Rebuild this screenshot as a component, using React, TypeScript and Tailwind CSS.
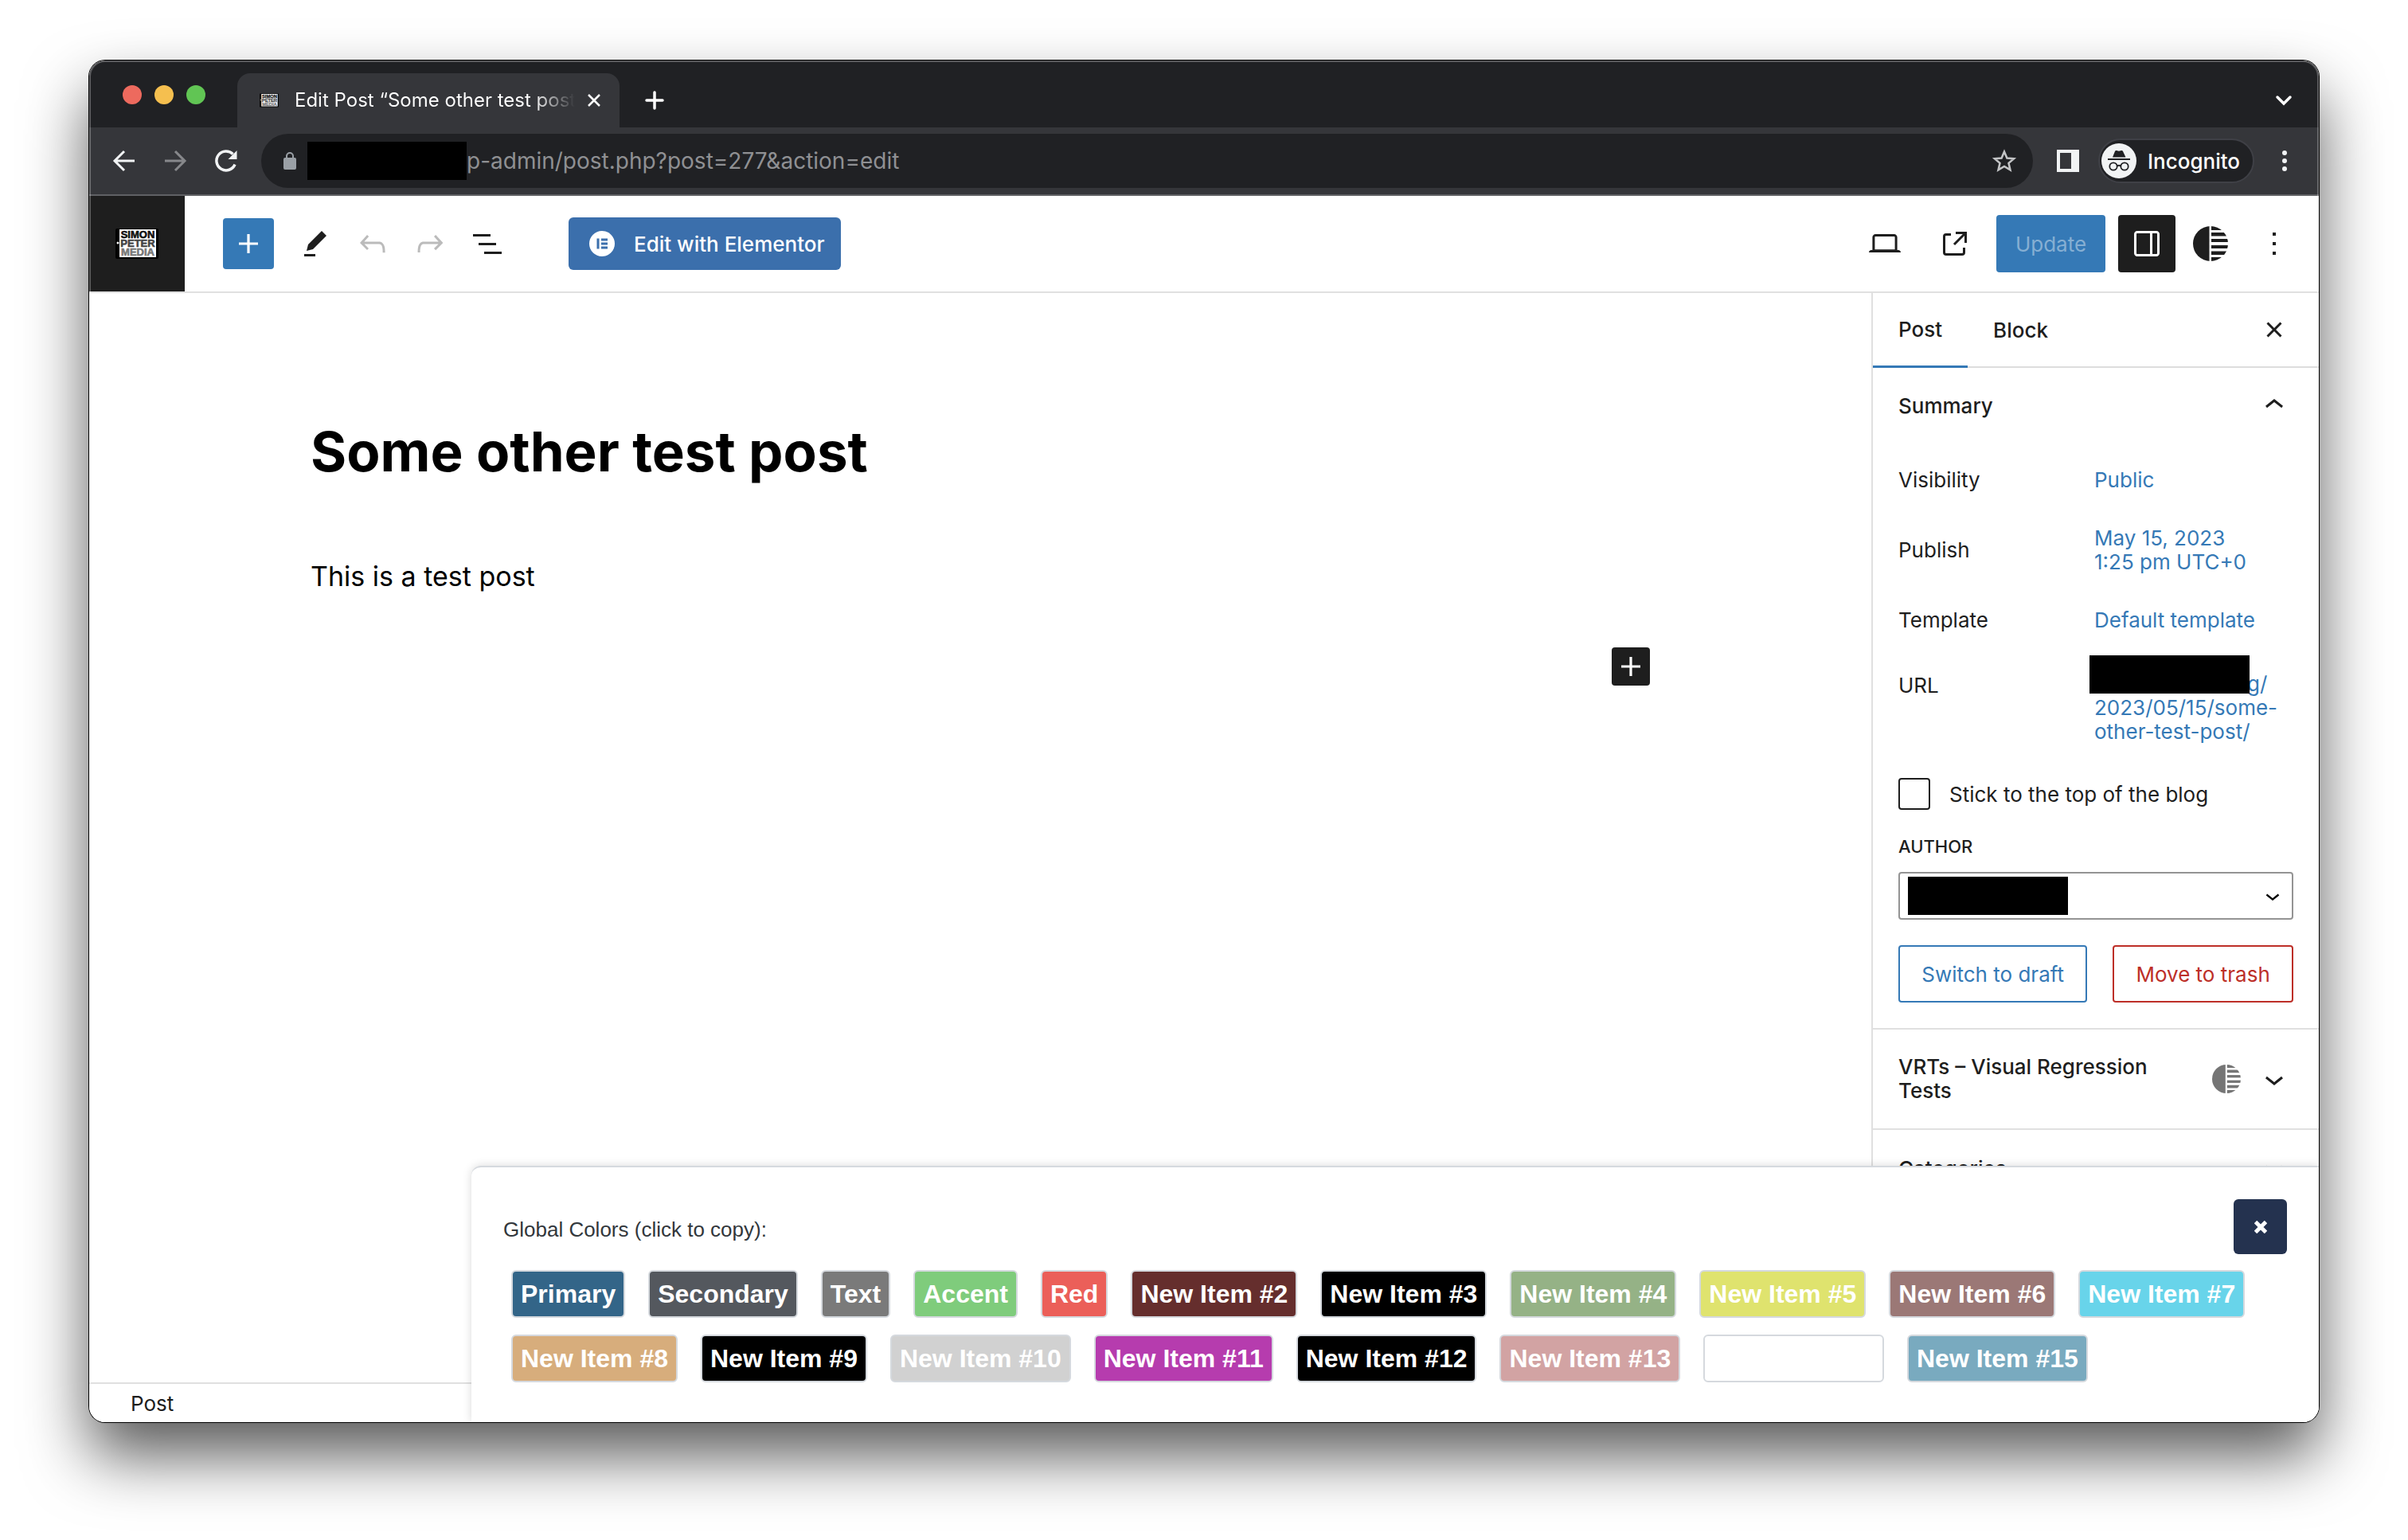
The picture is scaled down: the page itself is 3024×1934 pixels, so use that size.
import type { ReactNode } from 'react';

const font = "font-['Inter',sans-serif]";

function WpIcon({ d, size = 'size-12', className = '' }: { d: string; size?: string; className?: string }) {
  return (
    <svg viewBox="0 0 24 24" className={`${size} shrink-0 ${className}`} fill="currentColor" aria-hidden="true">
      <path fillRule="evenodd" d={d} />
    </svg>
  );
}

const icons = {
  plus: 'M18 11.2h-5.2V6h-1.6v5.2H6v1.6h5.2V18h1.6v-5.2H18z',
  edit: 'm19 7-3-3-8.5 8.5-1 4 4-1L19 7Zm-7 11.5H5V20h7v-1.5Z',
  undo: 'M18.3 11.7c-.6-.6-1.4-.9-2.3-.9H6.7l2.9-3.3-1.1-1-4.5 5L8.5 16l1-1-2.7-2.7H16c.5 0 .9.2 1.3.5 1 1 1 3.4 1 4.5v.3h1.5v-.2c0-1.5 0-4.3-1.5-5.7z',
  redo: 'M15.6 6.5l-1.1 1 2.9 3.3H8c-.9 0-1.7.3-2.3.9-1.4 1.5-1.4 4.2-1.4 5.6v.2h1.5v-.3c0-1.1 0-3.5 1-4.5.3-.3.7-.5 1.3-.5h9.2L14.5 15l1.1 1.1 4.6-4.6-4.6-5z',
  list: 'M3 6h11v1.5H3V6Zm3.5 5.5h11V13h-11v-1.5ZM21 17H10v1.5h11V17Z',
  desktop:
    'M20.5 16h-.7V8c0-1.1-.9-2-2-2H6.2c-1.1 0-2 .9-2 2v8h-.7c-.8 0-1.5.7-1.5 1.5h20c0-.8-.7-1.5-1.5-1.5zM5.7 8c0-.3.2-.5.5-.5h11.6c.3 0 .5.2.5.5v7.6H5.7V8z',
  external:
    'M19.5 4.5h-7V6h4.44l-5.97 5.97 1.06 1.06L18 7.06v4.44h1.5v-7Zm-13 1a2 2 0 0 0-2 2v10a2 2 0 0 0 2 2h10a2 2 0 0 0 2-2v-3H17v3a.5.5 0 0 1-.5.5h-10a.5.5 0 0 1-.5-.5v-10a.5.5 0 0 1 .5-.5h3V5.500h-3Z',
  drawer:
    'M18 4H6c-1.1 0-2 .9-2 2v12c0 1.1.9 2 2 2h12c1.1 0 2-.9 2-2V6c0-1.1-.9-2-2-2zm-4 14.5H6c-.3 0-.5-.2-.5-.5V6c0-.3.2-.5.5-.5h8v13zm4.5-.5c0 .3-.2.5-.5.5h-2.5v-13H18c.3 0 .5.2.5.5v12z',
  more: 'M13 19h-2v-2h2v2zm0-6h-2v-2h2v2zm0-6h-2V5h2v2z',
  close:
    'M12 13.06l3.712 3.713 1.061-1.06L13.061 12l3.712-3.712-1.06-1.06L12 10.938 8.288 7.227l-1.061 1.06L10.939 12l-3.712 3.712 1.06 1.061L12 13.061z',
  up: 'M6.5 12.4L12 8l5.5 4.4-.9 1.2L12 10l-4.5 3.6-1-1.2z',
  down: 'M17.5 11.6L12 16l-5.5-4.4.9-1.2L12 14l4.5-3.6 1 1.2z',
};

function VrtIcon({ className, id }: { className: string; id: string }) {
  return (
    <svg viewBox="0 0 44 44" className={className} fill="currentColor" aria-hidden="true">
      <clipPath id={id}>
        <circle cx="22" cy="22" r="22" />
      </clipPath>
      <g clipPath={`url(#${id})`}>
        <rect x="0" y="0" width="20.500" height="44" />
        <rect x="23" y="0" width="21" height="5" />
        <rect x="23" y="8" width="21" height="4.500" />
        <rect x="23" y="16" width="21" height="4" />
        <rect x="23" y="24" width="21" height="4" />
        <rect x="23" y="31.500" width="21" height="4.500" />
        <rect x="23" y="39" width="21" height="5" />
      </g>
    </svg>
  );
}

function SiteLogo({ className }: { className: string }) {
  return (
    <svg viewBox="0 0 54 38" className={className} aria-hidden="true">
      <rect width="54" height="38" rx="2" fill="#000" />
      <rect x="5" y="1" width="46" height="35" fill="#fff" />
      <circle cx="3" cy="18" r="1.500" fill="#fff" />
      <g fontFamily="Liberation Sans, sans-serif" fontWeight="700" fontSize="13" textAnchor="middle" strokeWidth="0.600">
        <text x="28" y="12.300" fill="#111" stroke="#111">SIMON</text>
        <text x="28" y="23.300" fill="#444" stroke="#444">PETER</text>
        <text x="28" y="33.800" fill="#777" stroke="#777">MEDIA</text>
      </g>
    </svg>
  );
}

function BrowserChrome() {
  return (
    <header className="shrink-0 text-white">
      <div className="flex h-[84px] items-stretch bg-[#202124] pr-8">
        <div className="flex w-[186px] shrink-0 items-center gap-4 pl-[42px] pt-0.5">
          <span className="size-6 rounded-full bg-[#ed6a5e]" />
          <span className="size-6 rounded-full bg-[#f5bf4f]" />
          <span className="size-6 rounded-full bg-[#61c554]" />
        </div>
        <div className="mt-4 flex w-[480px] items-center rounded-t-2xl bg-[#35363a] pl-7 pr-6">
          <SiteLogo className="h-[18px] w-6 shrink-0" />
          <span className="ml-5 w-[352px] overflow-hidden whitespace-nowrap bg-gradient-to-r from-white from-85% to-transparent bg-clip-text text-2xl text-transparent">
            Edit Post “Some other test post
          </span>
          <button aria-label="Close tab" className="ml-4">
            <svg viewBox="0 0 16 16" className="size-4" stroke="#fff" strokeWidth="2.500" aria-hidden="true">
              <path d="M1 1l14 14M15 1L1 15" />
            </svg>
          </button>
        </div>
        <button aria-label="New tab" className="ml-8 mt-4">
          <svg viewBox="0 0 24 24" className="size-6" stroke="#fff" strokeWidth="3.500" strokeLinecap="round" aria-hidden="true">
            <path d="M12 2v20M2 12h20" />
          </svg>
        </button>
        <button aria-label="Search tabs" className="ml-auto mt-4">
          <svg viewBox="0 0 24 24" className="size-6" stroke="#fff" strokeWidth="3.500" fill="none" strokeLinecap="round" aria-hidden="true">
            <path d="M4 8l8 8 8-8" />
          </svg>
        </button>
      </div>
      <div className="flex h-[86px] items-center border-b-2 border-[#606164] bg-[#35363a] pl-7 pr-10">
        <button aria-label="Back">
          <svg viewBox="0 0 32 32" className="size-8" stroke="#f1f3f4" strokeWidth="3" fill="none" aria-hidden="true">
            <path d="M29 16H4M16 4L4 16l12 12" />
          </svg>
        </button>
        <button aria-label="Forward" className="ml-8">
          <svg viewBox="0 0 32 32" className="size-8" stroke="#87888b" strokeWidth="3" fill="none" aria-hidden="true">
            <path d="M3 16h25M16 4l12 12-12 12" />
          </svg>
        </button>
        <button aria-label="Reload" className="ml-8">
          <svg viewBox="0 0 32 32" className="size-8" aria-hidden="true">
            <path d="M27 20.500A12 12 0 1 1 24.500 7.500" fill="none" stroke="#f1f3f4" strokeWidth="3.500" />
            <path d="M29.500 3v11h-11z" fill="#f1f3f4" />
          </svg>
        </button>
        <div className="ml-7 flex h-[68px] min-w-0 flex-1 items-center rounded-full bg-[#202124] pl-7 pr-5">
          <svg viewBox="0 0 16 22" className="h-[22px] w-4 shrink-0" aria-hidden="true">
            <rect y="7" width="16" height="15" rx="2" fill="#9aa0a6" />
            <path d="M4 8V5a4 4 0 0 1 8 0v3" fill="none" stroke="#9aa0a6" strokeWidth="2" />
          </svg>
          <span className="ml-3.5 h-12 w-[200px] shrink-0 bg-black" />
          <input
            aria-label="Address"
            className="min-w-0 flex-1 bg-transparent text-[28px] text-[#8f9093] outline-none"
            defaultValue="p-admin/post.php?post=277&action=edit"
          />
          <button aria-label="Bookmark">
            <svg viewBox="0 0 32 32" className="size-8" fill="none" stroke="#c3c4c6" strokeWidth="2.500" aria-hidden="true">
              <path d="M16 4.500l3.400 8 8.700.7-6.600 5.700 2 8.500L16 22.900l-7.500 4.500 2-8.500-6.600-5.700 8.700-.7z" />
            </svg>
          </button>
        </div>
        <button aria-label="Side panel" className="ml-[30px]">
          <svg viewBox="0 0 28 28" className="size-7" aria-hidden="true">
            <path fillRule="evenodd" d="M0 0h28v28H0zM4 4v20h14V4z" fill="#f1f3f4" />
          </svg>
        </button>
        <button className="ml-6 flex h-14 items-center gap-3.5 rounded-full border-2 border-[#3f4046] bg-[#202124] pl-0.5 pr-4 text-[26px] font-medium">
          <svg viewBox="0 0 44 44" className="size-11" aria-hidden="true">
            <circle cx="22" cy="22" r="22" fill="#f1f3f4" />
            <path d="M14 17.500l3-7.500q.7-1.400 2-1l3 .8 3-.8q1.300-.4 2 1l3.500 7.500z" fill="#202124" />
            <path d="M8 20h28" stroke="#202124" strokeWidth="2" />
            <g fill="none" stroke="#202124" strokeWidth="1.800">
              <circle cx="15" cy="29" r="4.700" />
              <circle cx="29" cy="29" r="4.700" />
              <path d="M19.500 28.500q2.500-1.500 5 0" />
            </g>
          </svg>
          Incognito
        </button>
        <button aria-label="Menu" className="ml-[35px]">
          <svg viewBox="0 0 6 26" className="h-[26px] w-1.5" fill="#f1f3f4" aria-hidden="true">
            <circle cx="3" cy="3" r="3" />
            <circle cx="3" cy="13" r="3" />
            <circle cx="3" cy="23" r="3" />
          </svg>
        </button>
      </div>
    </header>
  );
}

function EditorToolbar() {
  return (
    <div className="flex h-[122px] shrink-0 items-center border-b-2 border-[#e0e0e0]">
      <a href="#" aria-label="View posts" className="flex h-[120px] w-[120px] shrink-0 items-center justify-center bg-[#1e1e1e]">
        <SiteLogo className="h-[38px] w-[54px]" />
      </a>
      <button aria-label="Toggle block inserter" className="ml-12 flex size-16 items-center justify-center rounded bg-[#3579b6] text-white">
        <WpIcon d={icons.plus} />
      </button>
      <div className="ml-7 flex gap-6 text-[#1e1e1e]">
        <button aria-label="Tools"><WpIcon d={icons.edit} /></button>
        <button aria-label="Undo" className="text-[#bbb]"><WpIcon d={icons.undo} /></button>
        <button aria-label="Redo" className="text-[#bbb]"><WpIcon d={icons.redo} /></button>
        <button aria-label="Document overview"><WpIcon d={icons.list} /></button>
      </div>
      <button className="ml-[78px] flex h-[66px] items-center rounded-md bg-[#3b6fac] pl-[26px] pr-5 text-[26px] font-medium text-white">
        <svg viewBox="0 0 32 32" className="mr-6 size-8" aria-hidden="true">
          <circle cx="16" cy="16" r="16" fill="#fff" />
          <path d="M9.500 9.500h3v13h-3zM15 9.500h8v3h-8zM15 14.500h8v3h-8zM15 19.500h8v3h-8z" fill="#3b6fac" />
        </svg>
        Edit with Elementor
      </button>
      <div className="ml-auto flex items-center pr-8 text-[#1e1e1e]">
        <button aria-label="View"><WpIcon d={icons.desktop} /></button>
        <button aria-label="View post" className="ml-10"><WpIcon d={icons.external} /></button>
        <button className="ml-7 h-[72px] w-[137px] rounded bg-[#3579b6] text-[26px] text-[#86afd3]">Update</button>
        <button aria-label="Settings" className="ml-4 flex size-[72px] items-center justify-center rounded bg-[#1e1e1e] text-white">
          <WpIcon d={icons.drawer} />
        </button>
        <button aria-label="VRTs" className="ml-[22px]"><VrtIcon id="vrt-toolbar" className="size-11" /></button>
        <button aria-label="Options" className="ml-[34px]"><WpIcon d={icons.more} /></button>
      </div>
    </div>
  );
}

function SummaryRow({ label, top, children }: { label: string; top?: boolean; children: ReactNode }) {
  return (
    <div className={`flex leading-[30px] ${top ? 'items-start' : 'items-center'}`}>
      <span className={`w-[246px] shrink-0 ${top ? 'pt-0.5' : ''}`}>{label}</span>
      {children}
    </div>
  );
}

function Sidebar() {
  return (
    <aside className="w-[562px] shrink-0 overflow-hidden border-l-2 border-[#e0e0e0] text-[26px] text-[#1e1e1e]">
      <div className="flex h-[94px] items-stretch border-b-2 border-[#ddd] pr-8 font-medium">
        <button className="-mb-0.5 border-b-[3px] border-[#3579b6] px-8">Post</button>
        <button className="px-8">Block</button>
        <button aria-label="Close settings" className="ml-auto"><WpIcon d={icons.close} /></button>
      </div>
      <section className="border-b-2 border-[#e0e0e0] px-8 pb-8">
        <button className="flex h-[94px] w-full items-center justify-between font-medium">
          Summary
          <WpIcon d={icons.up} />
        </button>
        <div className="flex flex-col gap-[43px] pt-8">
          <SummaryRow label="Visibility"><a href="#" className="text-[#3579b6]">Public</a></SummaryRow>
          <SummaryRow label="Publish">
            <a href="#" className="text-[#3579b6]">May 15, 2023<br />1:25 pm UTC+0</a>
          </SummaryRow>
          <SummaryRow label="Template"><a href="#" className="text-[#3579b6]">Default template</a></SummaryRow>
        </div>
        <div className="relative mt-[50px]">
          <SummaryRow label="URL" top>
            <a href="#" className="text-[#3579b6]">
              <span className="block pl-[192px]">g/</span>
              2023/05/15/some-<br />other-test-post/
            </a>
          </SummaryRow>
          <span className="absolute -top-[21px] left-[240px] h-12 w-[201px] bg-black" />
        </div>
        <label className="mt-[43px] flex h-10 items-center gap-6">
          <input type="checkbox" className="size-10 appearance-none rounded border-2 border-[#1e1e1e] bg-white" />
          Stick to the top of the blog
        </label>
        <label htmlFor="author" className="mt-8 block text-[22px] font-medium leading-7">AUTHOR</label>
        <div className="relative mt-[18px] flex h-[60px] items-center">
          <select id="author" className="h-full w-full appearance-none rounded border-2 border-[#949494] bg-white" />
          <span className="absolute left-3 h-12 w-[201px] bg-black" />
          <WpIcon d={icons.down} size="size-9" className="absolute right-2 text-black" />
        </div>
        <div className="mt-8 flex gap-8">
          <button className="h-[72px] flex-auto rounded border-2 border-[#3579b6] text-[#3579b6]">Switch to draft</button>
          <button className="h-[72px] flex-auto rounded border-2 border-[#bd2f28] text-[#bd2f28]">Move to trash</button>
        </div>
      </section>
      <button className="flex w-full items-center border-b-2 border-[#e0e0e0] px-8 py-8 text-left font-medium leading-[30px]">
        <span className="w-[340px]">VRTs – Visual Regression Tests</span>
        <VrtIcon id="vrt-panel" className="ml-auto size-9 text-[#757575]" />
        <WpIcon d={icons.down} className="ml-[18px]" />
      </button>
      <button className="flex h-24 w-full items-center justify-between px-8 font-medium">
        Categories
        <WpIcon d={icons.down} />
      </button>
    </aside>
  );
}

const swatches = [
  ['Primary', 'bg-[#336588]'],
  ['Secondary', 'bg-[#54585e]'],
  ['Text', 'bg-[#7a7a7a]'],
  ['Accent', 'bg-[#7fcc7c]'],
  ['Red', 'bg-[#eb5f59]'],
  ['New Item #2', 'bg-[#652e2d]'],
  ['New Item #3', 'bg-black'],
  ['New Item #4', 'bg-[#95b286]'],
  ['New Item #5', 'bg-[#dfe36e]'],
  ['New Item #6', 'bg-[#9b7876]'],
  ['New Item #7', 'bg-[#68d4ea]'],
  ['New Item #8', 'bg-[#d7ad7c]'],
  ['New Item #9', 'bg-black'],
  ['New Item #10', 'bg-[#d1d1d1]'],
  ['New Item #11', 'bg-[#b63cae]'],
  ['New Item #12', 'bg-black'],
  ['New Item #13', 'bg-[#d2a3a3]'],
  ['New Item #14', 'bg-white'],
  ['New Item #15', 'bg-[#79aabf]'],
];

function GlobalColors() {
  return (
    <section className="absolute bottom-0 left-[480px] right-0 rounded-tl-xl border-t-2 border-[#d5d9de] bg-white px-10 pb-[50px] pt-10 font-['Liberation_Sans',sans-serif] shadow-[0_0_12px_rgba(0,0,0,0.15)]">
      <div className="flex items-start justify-between">
        <h2 className="pt-5 text-[26px] leading-9 text-[#32373c]">Global Colors (click to copy):</h2>
        <button aria-label="Close" className="flex h-[69px] w-[67px] items-center justify-center rounded-md bg-[#24324f]">
          <svg viewBox="0 0 16 16" className="size-4" stroke="#fff" strokeWidth="5" aria-hidden="true">
            <path d="M1.500 1.500l13 13M14.500 1.500l-13 13" />
          </svg>
        </button>
      </div>
      <div className="mt-5 flex flex-wrap gap-x-[29px] gap-y-[21px] px-[10px]">
        {swatches.map(([name, color]) => (
          <button key={name} className={`h-[60px] rounded-md border-2 border-[#d5d9de] px-2.5 text-[32px] font-bold leading-[56px] text-white ${color}`}>
            {name}
          </button>
        ))}
      </div>
    </section>
  );
}

export default function App() {
  return (
    <div className={`flex h-screen flex-col overflow-hidden bg-white px-28 pb-[148px] pt-[76px] ${font}`}>
      <div className="relative flex min-h-0 flex-1 flex-col rounded-[20px] shadow-[0_0_0_1px_#000,0_42px_80px_rgba(0,0,0,0.65)]">
        <div className="relative flex min-h-0 flex-1 flex-col overflow-hidden rounded-[20px] bg-white">
          <BrowserChrome />
          <EditorToolbar />
          <div className="flex min-h-0 flex-1">
            <main className="min-w-0 flex-1 px-[278px] pt-[149px] text-black">
              <h1 className="text-[69px] font-bold leading-[100px]">Some other test post</h1>
              <p className="mt-[82px] text-[34px] leading-[50px]">This is a test post</p>
              <div className="mt-16 flex justify-end">
                <button aria-label="Add block" className="flex size-12 items-center justify-center rounded bg-[#1e1e1e] text-white">
                  <WpIcon d={icons.plus} />
                </button>
              </div>
            </main>
            <Sidebar />
          </div>
          <footer className="flex h-[50px] shrink-0 items-center border-t-2 border-[#e0e0e0] px-[52px] text-[26px] text-[#1e1e1e]">
            Post
          </footer>
          <GlobalColors />
          <div className="pointer-events-none absolute inset-0 rounded-[20px] shadow-[inset_0_0_0_2px_rgba(255,255,255,0.25)]" />
        </div>
      </div>
    </div>
  );
}
